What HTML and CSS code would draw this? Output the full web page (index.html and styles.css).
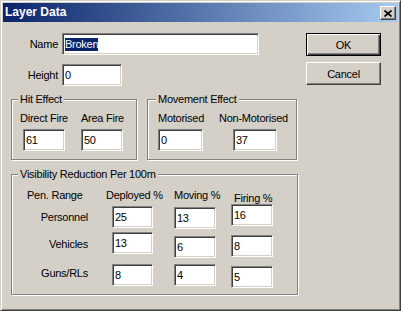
FILE: index.html
```html
<!DOCTYPE html>
<html lang="en">

<head>
    <meta charset="UTF-8">
    <title>Layer Data</title>
    <link rel="stylesheet" href="styles.css">
</head>

<body>
    <div class="dialog">
        <div class="titlebar">
            <span class="title">Layer Data</span>
            <button class="close-btn" title="Close">
                <svg width="8" height="7" viewBox="0 0 8 7">
                    <path d="M0.5 0.5 L7.5 6.5 M7.5 0.5 L0.5 6.5" stroke="#000" stroke-width="1.7" fill="none"/>
                </svg>
            </button>
        </div>
        <div class="content">
            <div class="form">
                <div class="line">
                    <span class="line-label">Name</span>
                    <div class="field field-name"><span class="selected">Broken</span></div>
                </div>
                <div class="line line-second">
                    <span class="line-label">Height</span>
                    <div class="field field-height">0</div>
                </div>

                <div class="groups">
                    <div class="group group-hit">
                        <div class="group-title">Hit Effect</div>
                        <div class="pair">
                            <div class="cell cell-direct">
                                <span class="cell-label">Direct Fire</span>
                                <div class="field field-small">61</div>
                            </div>
                            <div class="cell">
                                <span class="cell-label">Area Fire</span>
                                <div class="field field-small">50</div>
                            </div>
                        </div>
                    </div>
                    <div class="group group-move">
                        <div class="group-title title-move">Movement Effect</div>
                        <div class="pair">
                            <div class="cell cell-motor">
                                <span class="cell-label">Motorised</span>
                                <div class="field field-motor">0</div>
                            </div>
                            <div class="cell cell-nonmotor">
                                <span class="cell-label">Non-Motorised</span>
                                <div class="field field-nonmotor">37</div>
                            </div>
                        </div>
                    </div>
                </div>

                <div class="group group-vis">
                    <div class="group-title">Visibility Reduction Per 100m</div>
                    <div class="vis-table">
                        <div class="vis-col col-labels">
                            <span class="col-head head-pen">Pen. Range</span>
                            <span class="row-label label-personnel">Personnel</span>
                            <span class="row-label label-vehicles">Vehicles</span>
                            <span class="row-label label-guns">Guns/RLs</span>
                        </div>
                        <div class="vis-col col-deployed">
                            <span class="col-head">Deployed %</span>
                            <div class="field field-vis dep-1">25</div>
                            <div class="field field-vis dep-2">13</div>
                            <div class="field field-vis dep-3">8</div>
                        </div>
                        <div class="vis-col col-moving">
                            <span class="col-head">Moving %</span>
                            <div class="field field-vis mov-1">13</div>
                            <div class="field field-vis mov-2">6</div>
                            <div class="field field-vis mov-3">4</div>
                        </div>
                        <div class="vis-col col-firing">
                            <span class="col-head head-firing">Firing %</span>
                            <div class="field field-vis fir-1">16</div>
                            <div class="field field-vis fir-2">8</div>
                            <div class="field field-vis fir-3">5</div>
                        </div>
                    </div>
                </div>
            </div>

            <div class="actions">
                <button class="btn btn-default">OK</button>
                <button class="btn btn-cancel">Cancel</button>
            </div>
        </div>
    </div>
</body>

</html>
```

FILE: styles.css
```css
html, body {
    margin: 0;
    padding: 0;
    background: #d4d0c8;
}

body {
    font-family: "Liberation Sans", Arial, sans-serif;
    font-size: 11px;
    letter-spacing: -0.25px;
    color: #000;
}

.dialog {
    box-sizing: border-box;
    width: 401px;
    height: 311px;
    padding: 2px;
    background: #d4d0c8;
    border: 1px solid;
    border-color: #d4d0c8 #404040 #404040 #d4d0c8;
    box-shadow: inset 1px 1px 0 #fff, inset -1px -1px 0 #808080;
    display: flex;
    flex-direction: column;
}

/* caption */
.titlebar {
    height: 19px;
    margin-top: 0;
    display: flex;
    align-items: flex-start;
    justify-content: space-between;
    background: linear-gradient(to right, #0a246a, #a6caf0);
}

.title {
    color: #fff;
    font-weight: bold;
    font-size: 12px;
    letter-spacing: 0;
    line-height: 19px;
    padding-left: 2px;
}

.close-btn {
    box-sizing: border-box;
    width: 16px;
    height: 14px;
    margin: 3px 2px 0 0;
    padding: 0;
    display: flex;
    align-items: center;
    justify-content: center;
    background: #d4d0c8;
    border: 1px solid;
    border-color: #fff #404040 #404040 #fff;
    box-shadow: inset -1px -1px 0 #808080;
}

/* body */
.content {
    flex: 1;
    display: flex;
}

.form {
    width: 295px;
    padding: 11px 0 0 8px;
}

.line {
    display: flex;
    align-items: center;
    gap: 4px;
}

.line-second {
    margin-top: 9px;
}

.line-label {
    width: 47px;
    text-align: right;
}

.field {
    box-sizing: border-box;
    height: 22px;
    padding-left: 2px;
    line-height: 20px;
    background: #fff;
    border: 1px solid;
    border-color: #808080 #fff #fff #808080;
    box-shadow: inset 1px 1px 0 #404040, inset -1px -1px 0 #d4d0c8;
    display: flex;
    align-items: center;
}

.field-name {
    width: 197px;
}

.selected {
    background: #0a246a;
    color: #fff;
    line-height: 13px;
}

.field-height {
    width: 60px;
}

/* group boxes */
.groups {
    display: flex;
    gap: 10px;
    margin-top: 13px;
}

.group {
    box-sizing: border-box;
    border: 1px solid #808080;
    box-shadow: inset 1px 1px 0 #fff, 1px 1px 0 #fff;
    padding-bottom: 8px;
}

.group-hit {
    width: 126px;
}

.group-move {
    width: 150px;
}

.group-title {
    width: fit-content;
    margin: -8px 0 0 6px;
    padding: 0 2px;
    line-height: 14px;
    background: #d4d0c8;
}

.title-move {
    margin-left: 8px;
}

.pair {
    display: flex;
    margin-top: 5px;
}

.cell {
    display: flex;
    flex-direction: column;
    align-items: flex-start;
}

.cell-label {
    line-height: 14px;
    white-space: nowrap;
}

.cell .field {
    margin-top: 4px;
}

.cell-direct {
    width: 69px;
}

.cell-direct .cell-label {
    margin-left: 8px;
}

.cell-direct .field {
    margin-left: 11px;
}

.field-small {
    width: 42px;
}

.cell-motor {
    width: 61px;
    margin-left: 10px;
}

.field-motor {
    width: 45px;
}

.cell-nonmotor .field {
    margin-left: 14px;
}

.field-nonmotor {
    width: 44px;
}

/* visibility table */
.group-vis {
    width: 287px;
    height: 121px;
    margin-top: 14px;
}

.vis-table {
    display: flex;
    margin-top: 7px;
}

.vis-col {
    display: flex;
    flex-direction: column;
    align-items: flex-start;
}

.col-head {
    line-height: 14px;
    white-space: nowrap;
}

.col-labels {
    width: 77px;
    align-items: stretch;
}

.head-pen {
    padding-left: 15px;
}

.row-label {
    line-height: 14px;
    text-align: right;
    padding-right: 1px;
}

.label-personnel {
    margin-top: 8px;
}

.label-vehicles {
    margin-top: 13px;
}

.label-guns {
    margin-top: 15px;
}

.col-deployed {
    width: 68px;
    margin-left: 17px;
}

.col-deployed .field {
    margin-left: 6px;
    width: 41px;
}

.col-moving {
    width: 57px;
}

.field-vis {
    width: 42px;
}

.head-firing {
    margin: 3px 0 0 3px;
}

.dep-1 { margin-top: 4px; }
.dep-2 { margin-top: 4px; }
.dep-3 { margin-top: 10px; }
.mov-1 { margin-top: 5px; }
.mov-2 { margin-top: 7px; }
.mov-3 { margin-top: 6px; }
.fir-1 { margin-top: -1px; }
.fir-2 { margin-top: 9px; }
.fir-3 { margin-top: 9px; }

/* buttons */
.actions {
    display: flex;
    flex-direction: column;
    gap: 6px;
    padding-top: 11px;
}

.btn {
    box-sizing: border-box;
    width: 75px;
    height: 23px;
    padding: 0;
    font-family: inherit;
    font-size: 11px;
    letter-spacing: -0.25px;
    color: #000;
    background: #d4d0c8;
    border: 1px solid;
    border-color: #fff #404040 #404040 #fff;
    box-shadow: inset -1px -1px 0 #808080;
}

.btn-default {
    border-color: #000;
    box-shadow: inset 1px 1px 0 #fff, inset -1px -1px 0 #404040, inset -2px -2px 0 #808080;
}
```
